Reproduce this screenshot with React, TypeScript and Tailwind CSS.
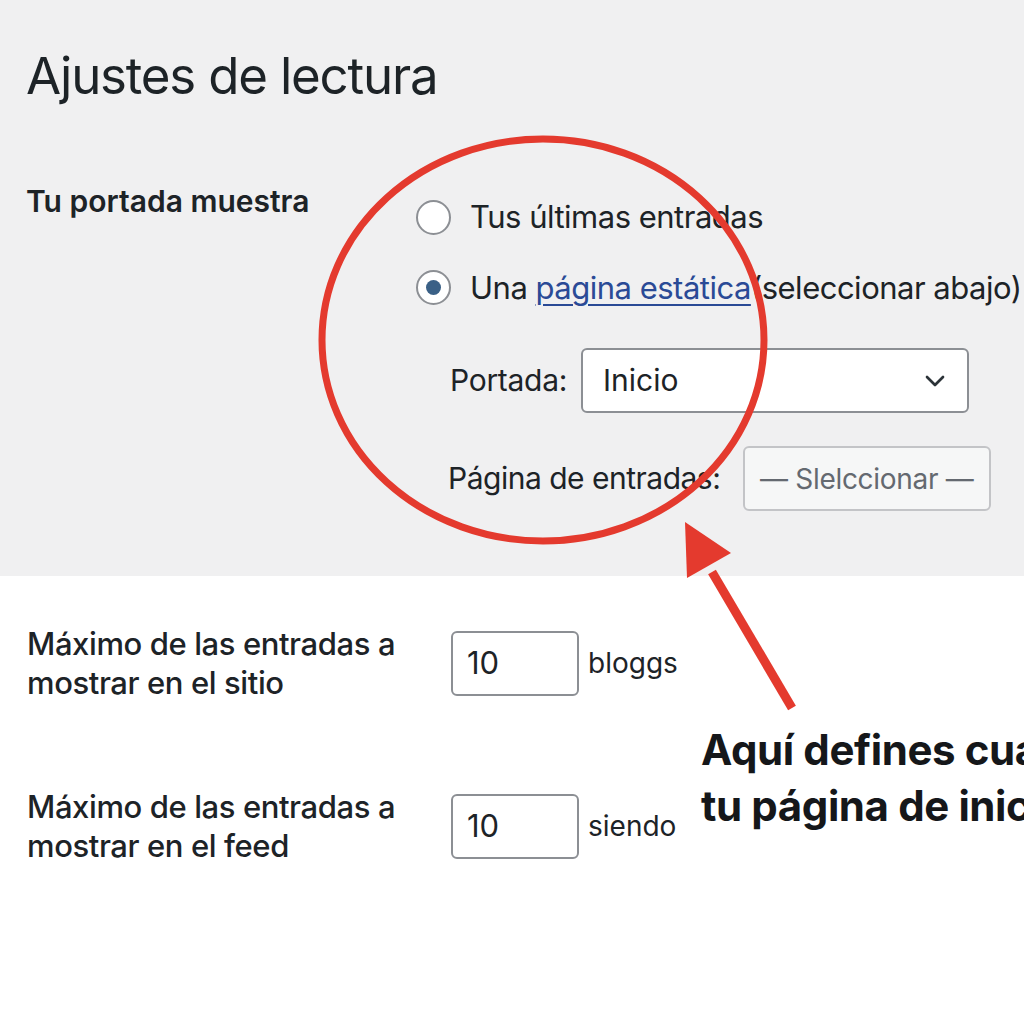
import { ChevronDown } from 'lucide-react'

// Reading settings screen with a red callout drawn over the front-page options
function Radio({ checked }: { checked?: boolean }) {
  return (
    <span className="flex items-center justify-center w-[35px] h-[35px] rounded-full border-2 border-[#8c8f94] bg-white shrink-0">
      {checked && <span className="w-[15px] h-[15px] rounded-full bg-[#3a6086]" />}
    </span>
  )
}

function NumberRow({ lines, value, unit }: { lines: string[]; value: string; unit: string }) {
  return (
    <div className="flex items-center">
      <div className="w-[424px] text-[31px] leading-[39px] font-medium tracking-[-0.4px]">
        {lines.map((l) => (
          <div key={l}>{l}</div>
        ))}
      </div>
      <div className="w-[128px] h-[65px] rounded-[6px] border-2 border-[#8c8f94] bg-white flex items-center pl-[14px] text-[31px]">
        {value}
      </div>
      <span className="ml-[9px] text-[28px] text-[#1d2327]">{unit}</span>
    </div>
  )
}

export default function App() {
  return (
    <div
      className="relative w-[1024px] h-[1024px] overflow-hidden bg-white text-[#1d2327]"
      style={{ fontFamily: 'Inter, "Noto Sans", sans-serif' }}
    >
      {/* grey settings panel */}
      <section className="h-[576px] bg-[#f0f0f1] pl-[26px] pt-[47px]">
        <h1 className="text-[51px] leading-[58px] tracking-[-1.2px] font-normal">Ajustes de lectura</h1>

        <div className="flex mt-[76px]">
          <div className="w-[390px] pt-[2px] text-[30px] font-semibold tracking-[0px] leading-[36px]">
            Tu portada muestra
          </div>

          <div className="flex flex-col whitespace-nowrap">
            <label className="flex items-center gap-[19px] text-[31px] mt-[13px]">
              <Radio />
              <span className="tracking-[-0.5px]">Tus últimas entradas</span>
            </label>
            <label className="flex items-center gap-[19px] text-[31px] mt-[24px]">
              <Radio checked />
              <span className="tracking-[-0.5px]">
                Una{' '}
                <a className="text-[#2a4a96] underline underline-offset-[5px] decoration-[2px]">página estática</a>
                (seleccionar abajo)
              </span>
            </label>

            <div className="flex items-center ml-[34px] mt-[37px]">
              <span className="text-[30px] tracking-[-0.3px] w-[131px]">Portada:</span>
              <div className="w-[388px] h-[65px] rounded-[6px] border-2 border-[#8c8f94] bg-white flex items-center justify-between pl-[20px] pr-[16px] text-[30px]">
                <span>Inicio</span>
                <ChevronDown size={32} strokeWidth={2} className="text-[#2c3338]" />
              </div>
            </div>

            <div className="flex items-center ml-[32px] mt-[33px]">
              <span className="text-[30px] tracking-[-0.5px] w-[295px]">Página de entradas:</span>
              <div className="w-[248px] h-[65px] rounded-[6px] border-2 border-[#c3c4c7] bg-[#f6f7f7] flex items-center pl-[15px] text-[28px] text-[#646970] tracking-[-0.3px]">
                — Slelccionar —
              </div>
            </div>
          </div>
        </div>
      </section>

      {/* numeric options */}
      <section className="pl-[27px] pt-[48px] flex flex-col gap-[85px]">
        <NumberRow lines={['Máximo de las entradas a', 'mostrar en el sitio']} value="10" unit="bloggs" />
        <NumberRow lines={['Máximo de las entradas a', 'mostrar en el feed']} value="10" unit="siendo" />
      </section>

      {/* callout circle and arrow */}
      <svg className="absolute inset-0 pointer-events-none" width="1024" height="1024" viewBox="0 0 1024 1024">
        <ellipse cx="543" cy="340" rx="221" ry="201" fill="none" stroke="#e43a2e" strokeWidth="7" />
        <line x1="792" y1="708" x2="712" y2="572" stroke="#e43a2e" strokeWidth="9" />
        <polygon points="685,522 687,578 731,553" fill="#e43a2e" />
      </svg>

      <p className="absolute left-[701px] top-[722px] whitespace-nowrap text-[42px] leading-[56px] font-bold tracking-[-0.4px] text-[#15171a]">
        Aquí defines cuál es
        <br />
        tu página de inicio
      </p>
    </div>
  )
}
